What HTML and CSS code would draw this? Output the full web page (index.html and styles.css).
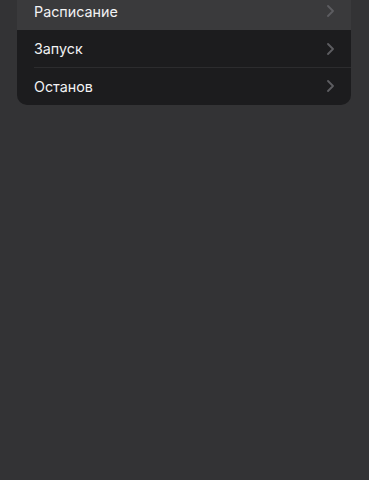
FILE: index.html
```html
<!DOCTYPE html>
<html lang="ru">
<head>
  <meta charset="UTF-8">
  <meta name="viewport" content="width=device-width, initial-scale=1.0">
  <title>Настройки</title>
  <link rel="stylesheet" href="styles.css">
</head>
<body>
  <div class="list">
    <div class="row active">
      <span class="label">Расписание</span>
      <svg class="chevron" viewBox="0 0 7 12" width="7" height="12"><path d="M1 1l5 5-5 5" /></svg>
    </div>
    <div class="row">
      <span class="label">Запуск</span>
      <svg class="chevron" viewBox="0 0 7 12" width="7" height="12"><path d="M1 1l5 5-5 5" /></svg>
    </div>
    <div class="row">
      <span class="label">Останов</span>
      <svg class="chevron" viewBox="0 0 7 12" width="7" height="12"><path d="M1 1l5 5-5 5" /></svg>
    </div>
  </div>
</body>
</html>
```

FILE: styles.css
```css
body {
  margin: 0;
  padding: 0;
  background-color: #333335;
  font-family: Inter, "Noto Sans", sans-serif;
}
.list {
  margin: -8px 18px 0 17px;
  background-color: #1c1c1e;
  border-radius: 0 0 10px 10px;
  overflow: hidden;
}
.row {
  display: flex;
  align-items: center;
  justify-content: space-between;
  height: 37.5px;
  padding: 1px 17px 0 17px;
  box-sizing: border-box;
  position: relative;
  color: #f2f2f4;
  font-size: 14.3px;
}
.row.active {
  background-color: #3a3a3c;
}
.row + .row:not(.active)::before {
  content: "";
  position: absolute;
  top: 0;
  left: 17px;
  right: 0;
  height: 1px;
  background-color: #2c2c2e;
}
.row.active + .row::before {
  display: none;
}
.chevron {
  fill: none;
  stroke: #5d5d61;
  stroke-width: 1.8;
  stroke-linecap: round;
  stroke-linejoin: round;
}
```
